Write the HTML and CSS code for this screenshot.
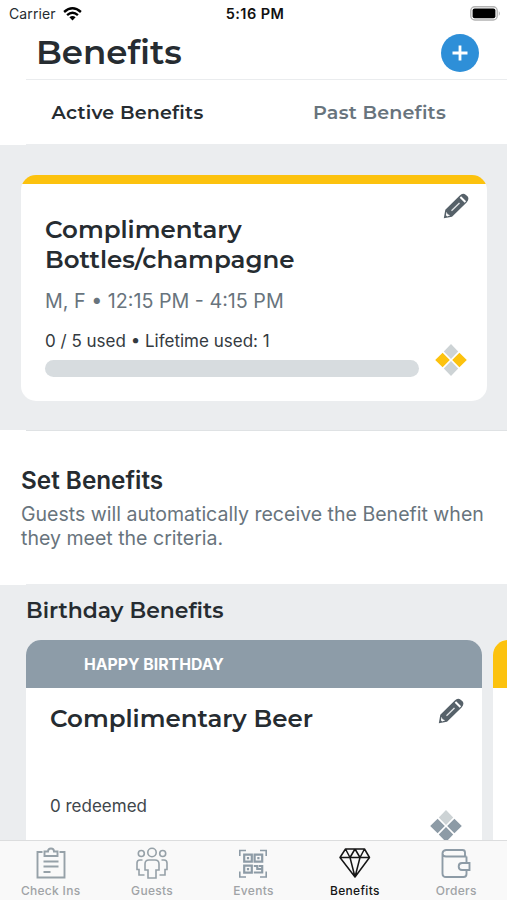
FILE: index.html
```html
<!DOCTYPE html>
<html lang="en">
<head>
<meta charset="utf-8">
<title>Benefits</title>
<link rel="stylesheet" href="styles.css">
</head>
<body>
<svg class="defs" width="0" height="0" aria-hidden="true">
  <symbol id="pencil" viewBox="0 0 26 26">
    <path fill="#566169" d="M.8 25.200 2.300 16.800 16.800 2.400Q19.800-.8 23 1.900L24.700 3.600Q26.500 6.300 23.600 9.400L9 23.700Z"/>
    <path d="M17.400 4 22.400 9" stroke="#fff" stroke-width="2"/>
    <path d="M8.500 17.700 16.500 10" stroke="#e3e6e8" stroke-width="1.300"/>
    <path fill="#fff" d="m3.600 18.800 1 2.500 2.600 1-3 1.100-1.300-1.200Z"/>
  </symbol>
</svg>
<div class="screen">
  <header class="status">
    <div class="carrier"><span class="carrier-name">Carrier</span>
      <svg width="19" height="14" viewBox="0 0 19 14" fill="none" stroke="#000" stroke-width="2.4"><path d="M1.1 5Q9.5-2.4 17.9 5M4.1 8.1Q9.5 3.4 14.9 8.1"/><path fill="#000" stroke="none" d="M6.4 10.3Q9.5 7.8 12.6 10.3L9.5 13.6Z"/></svg>
    </div>
    <div class="time">5:16 PM</div>
    <svg class="battery" width="31" height="15" viewBox="0 0 31 15"><rect x=".8" y=".8" width="26.4" height="13.2" rx="4" fill="#fff" stroke="#b3b3b3" stroke-width="1.4"/><rect x="2.6" y="2.5" width="22.8" height="9.8" rx="2" fill="#000"/><path d="M28.8 5v5q2-2.5 0-5" fill="#aaa"/></svg>
  </header>
  <div class="heading">
    <h1>Benefits</h1>
    <button class="add" aria-label="Add benefit"><svg width="16" height="16" viewBox="0 0 16 16"><path d="M8 .5v15M.5 8h15" stroke="#fff" stroke-width="2.8"/></svg></button>
  </div>
  <nav class="tabs">
    <span class="tab tab-on">Active Benefits</span>
    <span class="tab">Past Benefits</span>
  </nav>
  <section class="active">
    <article class="card">
      <div class="card-main">
        <h2>Complimentary<br>Bottles/champagne</h2>
        <p class="when">M, F • 12:15 PM - 4:15 PM</p>
        <p class="used">0 / 5 used • Lifetime used: 1</p>
        <div class="bar"></div>
      </div>
      <div class="card-side">
        <svg class="pencil" width="26" height="26"><use href="#pencil"/></svg>
        <svg width="32" height="32" viewBox="0 0 32 32"><path fill="#cdd3d5" d="M16 0 23.200 7.600 16 15 8.800 7.600ZM16 17l7.200 7.400L16 32l-7.200-7.600Z"/><path fill="#fcc20e" d="M7.600 8.700 14.800 16 7.600 23.300.2 16ZM24.400 8.700 31.800 16l-7.400 7.300L17.200 16Z"/></svg>
      </div>
    </article>
  </section>
  <section class="set">
    <h2>Set Benefits</h2>
    <p>Guests will automatically receive the Benefit when<br>they meet the criteria.</p>
  </section>
  <section class="birthday">
    <h3>Birthday Benefits</h3>
    <div class="cards">
      <article class="bcard">
        <div class="ribbon">HAPPY BIRTHDAY</div>
        <div class="bbody">
          <div class="bmain"><h2>Complimentary Beer</h2><p>0 redeemed</p></div>
          <div class="bside">
            <svg class="pencil" width="26" height="26"><use href="#pencil"/></svg>
            <svg width="32" height="32" viewBox="0 0 32 32"><path fill="#cdd3d5" d="M16 0 23.200 7.600 16 15 8.800 7.600Z"/><path fill="#8d9ba6" d="M16 17l7.200 7.400L16 32l-7.200-7.600ZM7.600 8.700 14.800 16 7.600 23.300.2 16ZM24.400 8.700 31.800 16l-7.400 7.300L17.200 16Z"/></svg>
          </div>
        </div>
      </article>
      <article class="bcard"><div class="ribbon ribbon-gold"></div></article>
    </div>
  </section>
  <footer class="tabbar">
    <div class="item"><svg width="34" height="34" viewBox="0 0 34 34" fill="none" stroke="#96a1a8" stroke-width="1.9"><path d="M8.500 5H3.500v25.500h27V5h-5M10.500 9V4.500H14q0-3 3-3t3 3h3.500V9ZM9.500 14.500h15M9.500 19.500h15M9.500 25h7"/></svg><span>Check Ins</span></div>
    <div class="item"><svg width="34" height="34" viewBox="0 0 34 34" fill="none" stroke="#96a1a8" stroke-width="1.6"><circle cx="17" cy="5.500" r="4.200"/><circle cx="6.300" cy="6.500" r="3"/><circle cx="27.700" cy="6.500" r="3"/><path d="M14 13h6q4 0 4 4v6h-3v8h-8v-8h-3v-6q0-4 4-4ZM7.500 13H5q-3 0-3 3v6.500h2V28h5.500M26.500 13H29q3 0 3 3v6.500h-2V28h-5.500"/></svg><span>Guests</span></div>
    <div class="item"><svg width="34" height="34" viewBox="0 0 34 34" fill="none" stroke="#8d9ba6" stroke-width="1.600"><path d="M3.800 9V3.500H10M24 3.500h6.200V9M3.800 24.500V30H10M24 30h6.200v-5.500"/><path stroke-width="2.200" d="M8.200 7.700h7.600v7H8.200ZM18.600 7.700h7.600v7h-7.600ZM8.200 18.700h7.600v7H8.200ZM17.800 19h3.500v3h4.900v-4M17.800 25.500h8.400v-3.500M24 18v2"/><path fill="#8d9ba6" stroke="none" d="M10.900 10.100h2.200v2.200h-2.200ZM21.300 10.100h2.200v2.200h-2.200ZM10.900 21.100h2.200v2.200h-2.200Z"/></svg><span>Events</span></div>
    <div class="item item-on"><svg width="34" height="34" viewBox="0 0 34 34" fill="none" stroke="#151515" stroke-width="1.500" stroke-linejoin="round"><path d="M7.500 2h19l5 8.500L17 30 2 10.500ZM2 10.500h29.500M7.500 2 12 10.500 17 2l5 8.500L26.500 2M12 10.500 17 30l5-19.500"/></svg><span>Benefits</span></div>
    <div class="item"><svg width="34" height="34" viewBox="0 0 34 34" fill="none" stroke="#8d9ba6" stroke-width="1.900"><path d="M27.500 9.500H7q-3.500 0-3.500-3T7 3h16.500q2.500 0 2.500 2.500v4M3.500 6.500v20q0 3.500 3.500 3.500h17.500q3 0 3-3v-4M27.500 9.500v6.500M30.500 16H23q-3.300 0-3.300 3.500T23 23h7.500Z"/></svg><span>Orders</span></div>
  </footer>
</div>
</body>
</html>
```
FILE: styles.css
```css
* { box-sizing: border-box; }
body { margin: 0; background: #fff; font-family: Inter, "Liberation Sans", sans-serif; color: #262c31; }
h1, h2, h3, p { margin: 0; }
h2, h3, p, span { white-space: nowrap; }
.defs { display: block; }
.screen { width: 507px; height: 900px; display: flex; flex-direction: column; overflow: hidden; }
h1, .tab, .card h2, .bcard h2, h3 { font-family: Montserrat, Inter, sans-serif; font-weight: 600; }

.status { height: 28px; flex: none; display: grid; grid-template-columns: 1fr auto 1fr; align-items: center; padding: 0 6px 1px 9px; font-size: 14px; }
.carrier { display: flex; align-items: center; gap: 7px; }
.carrier-name { letter-spacing: .1px; }
.time { font-weight: 600; font-size: 14.5px; letter-spacing: .4px; color: #111; }
.battery { justify-self: end; }

.heading { height: 51px; flex: none; display: flex; justify-content: space-between; align-items: center; padding: 0 28px 0 36px; }
h1 { font-size: 34px; line-height: 44px; padding-bottom: 3px; }
.add { width: 38px; height: 38px; border: 0; border-radius: 50%; background: #2e8fd8; display: grid; place-items: center; padding: 0; margin-bottom: 2px; }
.tabs { height: 65px; flex: none; margin-left: 26px; border-top: 1px solid #eaecee; display: grid; grid-template-columns: 203px 301px; }
.tab { text-align: center; font-size: 19.1px; line-height: 65px; color: #68747d; letter-spacing: .2px; }
.tab-on { color: #262c31; }

.active { height: 287px; flex: none; padding: 31px 20px 0 21px; background: linear-gradient(90deg, #fff 26px, #dfe2e4 26px) bottom / 100% 1px no-repeat, linear-gradient(#fff, #fff) 0 0 / 26px 1px no-repeat, #ebedef; }
.card { height: 226px; background: linear-gradient(#fcc20e 9px, #fff 9px); border-radius: 15px; padding: 9px 20px 0 24px; display: flex; justify-content: space-between; }
.card-main { width: 374px; padding-top: 30px; }
.card h2, .bcard h2 { font-size: 24.5px; line-height: 30px; }
.when { font-size: 19.7px; line-height: 24px; color: #68747d; margin-top: 15px; }
.used { font-size: 17px; line-height: 22px; margin-top: 17px; color: #343a40; }
.bar { height: 17px; border-radius: 9px; background: #d7dcdf; margin-top: 8px; }
.card-side { width: 32px; display: flex; flex-direction: column; align-items: center; padding: 9px 0 25px; justify-content: space-between; }
.card-side .pencil { margin-left: 9px; }

.set { height: 153px; flex: none; padding: 34px 0 0 21px; }
.set h2 { font-size: 24.3px; line-height: 30px; font-weight: 600; }
.set p { font-size: 19.55px; line-height: 24px; color: #68747d; margin-top: 7px; }

.birthday { flex: 1; min-height: 0; background: linear-gradient(#fff, #fff) 0 0 / 26px 1px no-repeat, #ebedef; padding-left: 26px; overflow: hidden; }
h3 { font-size: 21.9px; line-height: 28px; margin-top: 12px; }
.cards { display: flex; gap: 11px; margin-top: 16px; }
.bcard { width: 456px; height: 260px; flex: none; border-radius: 15px; background: #fff; overflow: hidden; }
.ribbon { height: 48px; background: #8d9ca8; color: #fff; font-size: 15.8px; font-weight: 700; line-height: 50px; padding-left: 58px; }
.ribbon-gold { background: #fcc20e; }
.bbody { display: flex; justify-content: space-between; padding: 0 20px 0 24px; }
.bmain { padding-top: 15px; }
.bmain p { font-size: 17px; line-height: 22px; margin-top: 62px; color: #40464b; }
.bside { width: 32px; display: flex; flex-direction: column; align-items: center; gap: 86px; padding-top: 10px; }
.bside .pencil { margin-left: 9px; }

.tabbar { height: 60px; flex: none; background: #f9f9f9; border-top: 1px solid #dcddde; display: grid; grid-template-columns: repeat(5, 1fr); }
.item { display: flex; flex-direction: column; align-items: center; padding-top: 6px; font-size: 12px; font-weight: 500; line-height: 16px; color: #a0a3a6; letter-spacing: .3px; }
.item span { margin-top: 2px; }
.item-on { color: #151515; }
```
